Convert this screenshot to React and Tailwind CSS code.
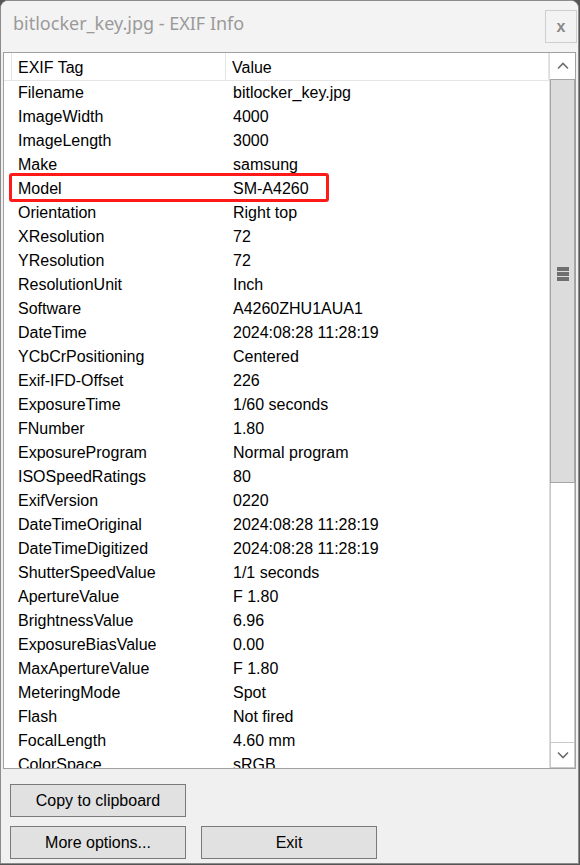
import React from 'react';

const rows = [
  ['Filename', 'bitlocker_key.jpg'],
  ['ImageWidth', '4000'],
  ['ImageLength', '3000'],
  ['Make', 'samsung'],
  ['Model', 'SM-A4260'],
  ['Orientation', 'Right top'],
  ['XResolution', '72'],
  ['YResolution', '72'],
  ['ResolutionUnit', 'Inch'],
  ['Software', 'A4260ZHU1AUA1'],
  ['DateTime', '2024:08:28 11:28:19'],
  ['YCbCrPositioning', 'Centered'],
  ['Exif-IFD-Offset', '226'],
  ['ExposureTime', '1/60 seconds'],
  ['FNumber', '1.80'],
  ['ExposureProgram', 'Normal program'],
  ['ISOSpeedRatings', '80'],
  ['ExifVersion', '0220'],
  ['DateTimeOriginal', '2024:08:28 11:28:19'],
  ['DateTimeDigitized', '2024:08:28 11:28:19'],
  ['ShutterSpeedValue', '1/1 seconds'],
  ['ApertureValue', 'F 1.80'],
  ['BrightnessValue', '6.96'],
  ['ExposureBiasValue', '0.00'],
  ['MaxApertureValue', 'F 1.80'],
  ['MeteringMode', 'Spot'],
  ['Flash', 'Not fired'],
  ['FocalLength', '4.60 mm'],
  ['ColorSpace', 'sRGB'],
];

const Btn = ({ children }) => (
  <button className="w-[176px] h-[33px] bg-[#e1e1e1] border border-[#7a7a7a] text-[16px] text-black">
    {children}
  </button>
);

export default function App() {
  return (
    <div className="w-[580px] h-[865px] bg-[#555] font-['Liberation_Sans',Arial,sans-serif]">
      <div className="w-[579px] h-[864px] bg-[#f0f0f0] border border-[#8c8c8c] rounded-tl-[8px] rounded-tr-[8px] flex flex-col overflow-hidden">
        {/* Title bar */}
        <div className="h-[51px] flex items-start justify-between bg-[#f3f3f3]">
          <div className="pl-[12px] pt-[10px] text-[18px] text-[#9a9a9a] font-['Noto_Sans',sans-serif] leading-[24px]">
            bitlocker_key.jpg - EXIF Info
          </div>
          <div className="mt-[9px] mr-[1px] w-[32px] h-[33px] border border-[#cfcfcf] flex items-center justify-center text-[#8a8a8a] text-[16px] font-bold">
            x
          </div>
        </div>

        {/* List */}
        <div className="mx-[2px] h-[717px] border border-[#a0a0a0] bg-white flex relative">
          <div className="flex-1 flex flex-col overflow-hidden">
            <div className="h-[28px] flex text-[16px] border-b border-[#e5e5e5] shrink-0">
              <div className="w-[8px] border-r border-[#e5e5e5]" />
              <div className="w-[214px] border-r border-[#e5e5e5] pl-[6px] flex items-center pt-[2px]">EXIF Tag</div>
              <div className="w-[323px] border-r border-[#e5e5e5] pl-[6px] flex items-center pt-[2px]">Value</div>
            </div>
            {rows.map(([k, v]) => (
              <div key={k} className="h-[24px] flex items-center text-[16px] text-black shrink-0 relative">
                <div className="w-[229px] pl-[14px]">{k}</div>
                <div>{v}</div>
                {k === 'Model' && (
                  <div className="absolute left-[5px] top-[-4px] w-[320px] h-[29px] border-[3px] border-[#ff1a1a] rounded-[3px]" />
                )}
              </div>
            ))}
          </div>
          {/* Scrollbar */}
          <div className="w-[26px] flex flex-col border-l border-[#dcdcdc]">
            <div className="h-[26px] bg-white flex items-center justify-center">
              <svg width="12" height="8" viewBox="0 0 12 8"><path d="M1 6.5 L6 1.5 L11 6.5" fill="none" stroke="#6d6d6d" strokeWidth="1.6" /></svg>
            </div>
            <div className="h-[404px] bg-[#dcdcdc] border border-[#a6a6a6] flex items-center justify-center">
              <div className="flex flex-col gap-[1px] -mt-[14px]">
                <div className="w-[12px] h-[4px] bg-[#6f6f6f]" />
                <div className="w-[12px] h-[4px] bg-[#6f6f6f]" />
                <div className="w-[12px] h-[4px] bg-[#6f6f6f]" />
              </div>
            </div>
            <div className="flex-1 bg-white border-x border-[#c8c8c8]" />
            <div className="h-[26px] bg-white border border-[#c8c8c8] flex items-center justify-center">
              <svg width="12" height="8" viewBox="0 0 12 8"><path d="M1 1.5 L6 6.5 L11 1.5" fill="none" stroke="#6d6d6d" strokeWidth="1.6" /></svg>
            </div>
          </div>
        </div>

        {/* Buttons */}
        <div className="flex flex-col gap-[9px] pl-[9px] pt-[15px]">
          <Btn>Copy to clipboard</Btn>
          <div className="flex gap-[15px]">
            <Btn>More options...</Btn>
            <Btn>Exit</Btn>
          </div>
        </div>
      </div>
    </div>
  );
}
